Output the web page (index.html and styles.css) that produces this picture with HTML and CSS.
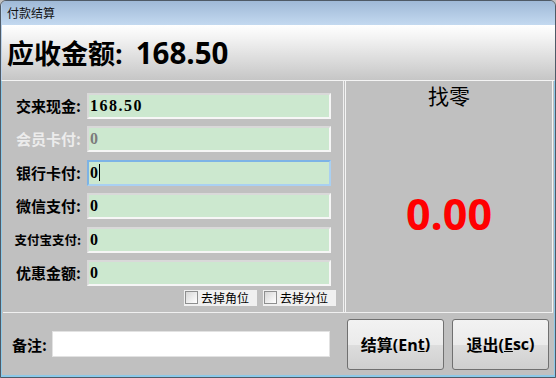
FILE: index.html
```html
<!DOCTYPE html>
<html lang="zh-CN">
<head>
<meta charset="utf-8">
<title>付款结算</title>
<link rel="stylesheet" href="styles.css">
</head>
<body>
<div class="window">
  <div class="titlebar">付款结算</div>
  <div class="header"><span class="due-label">应收金额:</span><span class="due-num">168.50</span></div>
  <div class="client">
    <div class="main">
      <div class="left">
        <div class="form">
          <label class="lbl">交来现金:</label>
          <div class="field"><span class="val">168.50</span></div>
          <label class="lbl disabled">会员卡付:</label>
          <div class="field"><span class="val dim">0</span></div>
          <label class="lbl">银行卡付:</label>
          <div class="field focus"><span class="val caret">0</span></div>
          <label class="lbl">微信支付:</label>
          <div class="field"><span class="val">0</span></div>
          <label class="lbl small">支付宝支付:</label>
          <div class="field"><span class="val">0</span></div>
          <label class="lbl">优惠金额:</label>
          <div class="field"><span class="val">0</span></div>
        </div>
        <div class="checks">
          <div class="check"><span class="box"></span>去掉角位</div>
          <div class="check"><span class="box"></span>去掉分位</div>
        </div>
      </div>
      <div class="right">
        <div class="change-title">找零</div>
        <div class="change-amount">0.00</div>
      </div>
    </div>
    <div class="bottom">
      <label class="note-lbl">备注:</label>
      <div class="note"></div>
      <div class="btn">结算(En<u>t</u>)</div>
      <div class="btn">退出(<u>E</u>sc)</div>
    </div>
  </div>
</div>
</body>
</html>
```
FILE: styles.css
```css
html, body {
  margin: 0;
  padding: 0;
  background: #c0c0c0;
}
.window {
  width: 556px;
  height: 378px;
  box-sizing: border-box;
  border: 1px solid #4f5a66;
  border-radius: 6px 6px 0 0;
  overflow: hidden;
  display: flex;
  flex-direction: column;
  background: #c0c0c0;
  font-family: "Noto Sans CJK SC", sans-serif;
}
.titlebar {
  height: 24px;
  flex: none;
  background: linear-gradient(#9fb9d7, #c3d9f0);
  font-size: 12px;
  line-height: 24px;
  padding-left: 5px;
  color: #111;
  border-left: 1px solid #b9d2ec;
}
.header {
  height: 55px;
  flex: none;
  background: linear-gradient(#ffffff 0%, #f2f2f2 25%, #c6c6c6 100%);
  font-family: "Open Sans", "Noto Sans CJK SC", sans-serif;
  font-weight: bold;
  line-height: 55px;
  padding-left: 5px;
  color: #000;
  border-left: 1px solid #b9d2ec;
  white-space: nowrap;
}
.due-label {
  font-size: 27px;
}
.due-num {
  font-size: 29.5px;
  margin-left: 13px;
}
.client {
  flex: 1;
  display: flex;
  flex-direction: column;
  border-top: 1px solid #f4f4f4;
  border-left: 1px solid #8cc9e8;
  border-right: 1px solid #8cc9e8;
  border-bottom: 2px solid #8cc9e8;
  padding: 0 1px 0 1px;
}
.main {
  display: flex;
  height: 231px;
  flex: none;
  border-bottom: 1px solid #f0f0f0;
}
.left {
  width: 340px;
  flex: none;
  border-right: 1px solid #f0f0f0;
  display: flex;
  flex-direction: column;
}
.form {
  display: grid;
  grid-template-columns: 81px 244px;
  column-gap: 3px;
  row-gap: 7.4px;
  grid-auto-rows: 26px;
  padding-top: 12px;
}
.lbl {
  text-align: right;
  font-weight: bold;
  font-size: 15px;
  line-height: 26px;
  color: #000;
  white-space: nowrap;
  padding-right: 3px;
}
.lbl.small {
  font-size: 12.5px;
}
.lbl.disabled {
  color: #ececec;
}
.field {
  box-sizing: border-box;
  background: #cce8cf;
  border: 2px solid;
  border-color: #d9d9d9 #f6f6f6 #f6f6f6 #d9d9d9;
  display: flex;
  align-items: center;
  padding-left: 1px;
}
.field.focus {
  border-color: #7db3e6 #a9d0f2 #a9d0f2 #7db3e6;
}
.val {
  font-family: "Liberation Serif", serif;
  font-weight: bold;
  font-size: 16px;
  letter-spacing: 1.5px;
  color: #000;
}
.val.dim {
  color: #7c7c7c;
}
.val.caret {
  border-right: 1px solid #000;
  line-height: 17px;
  letter-spacing: 0.5px;
}
.checks {
  display: flex;
  justify-content: flex-end;
  gap: 6px;
  padding-top: 4px;
  padding-right: 7px;
}
.check {
  display: flex;
  align-items: center;
  height: 16px;
  width: 73px;
  box-sizing: border-box;
  background: #f0f0f0;
  font-size: 12px;
  color: #000;
  padding-left: 1px;
  gap: 3px;
}
.box {
  width: 11px;
  height: 11px;
  border: 1px solid #8e8f8f;
  background: linear-gradient(135deg, #d7d7d7, #ffffff);
}
.right {
  flex: 1;
  margin-left: 1px;
  border-left: 1px solid #f4f4f4;
  border-right: 1px solid #f4f4f4;
  display: flex;
  flex-direction: column;
  align-items: center;
}
.change-title {
  font-size: 21px;
  line-height: 28px;
  color: #000;
}
.change-amount {
  margin-top: 80px;
  font-family: "Open Sans", sans-serif;
  font-weight: bold;
  font-size: 43px;
  line-height: 50px;
  color: #ff0000;
}
.bottom {
  flex: 1;
  display: flex;
  align-items: center;
  padding-left: 9px;
}
.note-lbl {
  flex: none;
  font-weight: bold;
  font-size: 15px;
  width: 40px;
}
.note {
  flex: none;
  width: 278px;
  height: 26px;
  box-sizing: border-box;
  background: #fff;
  border: 1px solid #e2e2e2;
  margin-right: 17px;
}
.btn {
  flex: none;
  width: 97px;
  height: 51px;
  box-sizing: border-box;
  border: 1px solid #707070;
  border-radius: 3px;
  background: linear-gradient(#f2f2f2 0%, #ebebeb 50%, #dddddd 51%, #cfcfcf 100%);
  display: flex;
  align-items: center;
  justify-content: center;
  font-family: "Open Sans", "Noto Sans CJK SC", sans-serif;
  font-weight: bold;
  font-size: 16px;
  color: #000;
}
.btn + .btn {
  margin-left: 8px;
}
.btn u {
  text-decoration-thickness: 1px;
}
```
